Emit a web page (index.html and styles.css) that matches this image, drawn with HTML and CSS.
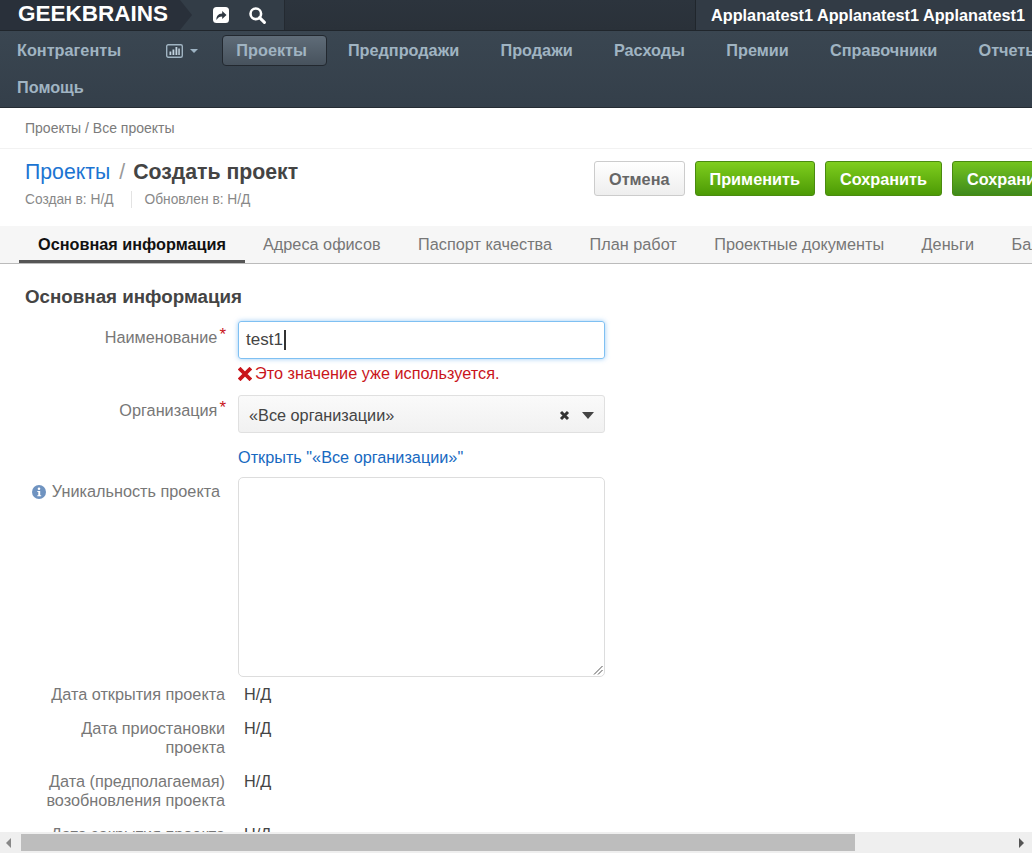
FILE: index.html
```html
<!DOCTYPE html>
<html lang="ru">
<head>
<meta charset="utf-8">
<title>Создать проект</title>
<link rel="stylesheet" href="styles.css">
</head>
<body>
<div class="viewport">
  <div class="page">
    <header class="topbar">
      <div class="brand">GEEKBRAINS</div>
      <div class="tools">
        <svg class="tool" width="18" height="18" viewBox="0 0 18 18"><rect x="1" y="1" width="16" height="16" rx="3.5" fill="#fff"/><path d="M4.500 14c-.4-3.600 1.600-6.300 5.700-6.500V5l4.300 4-4.300 4v-2.600c-2.600 0-4.300.9-5.700 3.600z" fill="#2f3842"/></svg>
        <svg class="tool" width="18" height="18" viewBox="0 0 18 18"><circle cx="7.800" cy="7.800" r="5.300" fill="none" stroke="#fff" stroke-width="2.600"/><path d="M11.600 11.600l4.800 4.800" stroke="#fff" stroke-width="3" stroke-linecap="round"/></svg>
      </div>
      <div class="topfill"></div>
      <div class="user">Applanatest1 Applanatest1 Applanatest1</div>
    </header>
    <nav class="nav">
      <a class="nav-item">Контрагенты</a>
      <a class="nav-item nav-chart">
        <svg width="17" height="14" viewBox="0 0 17 14"><rect x=".7" y=".7" width="15.600" height="12.600" rx="1.500" fill="none" stroke="#a0b4c2" stroke-width="1.400"/><path d="M3.500 7.500h1.800V11H3.500zM6.500 5.500h1.800V11H6.500zM9.500 3h1.800v8H9.500zM12.300 4.500h1.500V11h-1.500z" fill="#c2d3df"/></svg>
        <span class="caret"></span>
      </a>
      <a class="nav-item nav-active">Проекты</a>
      <a class="nav-item">Предпродажи</a>
      <a class="nav-item">Продажи</a>
      <a class="nav-item">Расходы</a>
      <a class="nav-item">Премии</a>
      <a class="nav-item">Справочники</a>
      <a class="nav-item">Отчеты</a>
      <a class="nav-item">Помощь</a>
    </nav>
    <div class="crumbs">Проекты / Все проекты</div>
    <section class="head">
      <div class="head-left">
        <h1 class="title"><a class="title-link">Проекты</a><span class="title-sep">/</span><b>Создать проект</b></h1>
        <div class="meta"><span class="meta-a">Создан в: Н/Д</span><span class="meta-b">Обновлен в: Н/Д</span></div>
      </div>
      <div class="actions">
        <button class="btn btn-plain">Отмена</button>
        <button class="btn btn-green">Применить</button>
        <button class="btn btn-green">Сохранить</button>
        <button class="btn btn-green btn-dark">Сохранить и закрыть</button>
      </div>
    </section>
    <div class="tabs">
      <a class="tab tab-active">Основная информация</a>
      <a class="tab">Адреса офисов</a>
      <a class="tab">Паспорт качества</a>
      <a class="tab">План работ</a>
      <a class="tab">Проектные документы</a>
      <a class="tab">Деньги</a>
      <a class="tab">Баланс</a>
    </div>
    <main class="form">
      <h2 class="section-title">Основная информация</h2>
      <div class="row">
        <label class="label">Наименование<i class="star">*</i></label>
        <div class="field">
          <div class="input">test1<span class="cursor"></span></div>
          <div class="error"><svg width="14" height="14" viewBox="0 0 14 14"><path d="M2.500 2.500l9 9M11.500 2.500l-9 9" stroke="#c9151b" stroke-width="3.800" stroke-linecap="square"/></svg>Это значение уже используется.</div>
        </div>
      </div>
      <div class="row row-org">
        <label class="label label-org">Организация<i class="star">*</i></label>
        <div class="field">
          <div class="select">
            <span class="select-text">«Все организации»</span>
            <svg width="11" height="11" viewBox="0 0 11 11"><path d="M2 2l7 7M9 2l-7 7" stroke="#333" stroke-width="3"/></svg>
            <span class="select-caret"></span>
          </div>
          <a class="open-link">Открыть "«Все организации»"</a>
        </div>
      </div>
      <div class="row row-uniq">
        <label class="label label-info"><svg width="14" height="14" viewBox="0 0 14 14"><circle cx="7" cy="7" r="7" fill="#6f93c0"/><circle cx="7" cy="3.700" r="1.300" fill="#fff"/><path d="M5.300 6h2.900v4.200h1v1.100H5.300v-1.100h1V7.100h-1z" fill="#fff"/></svg>Уникальность проекта</label>
        <div class="field">
          <div class="textarea">
            <svg class="grip" width="10" height="10" viewBox="0 0 10 10"><path d="M9.500 1L1 9.500M9.500 5L5 9.500" stroke="#555" stroke-width="1"/></svg>
          </div>
        </div>
      </div>
      <div class="drow"><div class="dlabel">Дата открытия проекта</div><div class="dval">Н/Д</div></div>
      <div class="drow"><div class="dlabel">Дата приостановки проекта</div><div class="dval">Н/Д</div></div>
      <div class="drow"><div class="dlabel">Дата (предполагаемая) возобновления проекта</div><div class="dval">Н/Д</div></div>
      <div class="drow"><div class="dlabel">Дата закрытия проекта</div><div class="dval">Н/Д</div></div>
    </main>
  </div>
</div>
<div class="scrollbar">
  <span class="arrow arrow-left"></span>
  <div class="track"><div class="thumb"></div></div>
  <span class="arrow arrow-right"></span>
</div>
</body>
</html>
```
FILE: styles.css
```css
* { box-sizing: border-box; }
html, body { margin: 0; height: 100%; overflow: hidden; }
body {
  display: flex;
  flex-direction: column;
  font-family: "Liberation Sans", Arial, sans-serif;
  font-size: 16.25px;
  color: #444;
  background: #fff;
}
.viewport { flex: 1; min-height: 0; overflow: hidden; }
.page { width: 1224px; }

/* top bar */
.topbar {
  display: flex;
  height: 31px;
  background: linear-gradient(#2c343d, #2a3139);
  border-bottom: 1px solid #20262c;
  color: #fff;
}
.brand {
  position: relative;
  z-index: 1;
  flex: none;
  width: 192px;
  padding-left: 18px;
  font-size: 22.5px;
  font-weight: bold;
  line-height: 28px;
  background: #29303a;
  clip-path: polygon(0 0, 180px 0, 192px 15px, 180px 30px, 0 30px);
}
.tools {
  display: flex;
  flex: none;
  gap: 18px;
  align-items: center;
  width: 105px;
  margin-left: -12px;
  padding: 0 0 0 32px;
  background: #333d47;
  border-right: 1px solid #242a31;
}
.tool { flex: none; }
.topfill { flex: none; width: 410px; }
.user {
  flex: none;
  width: 337px;
  padding-left: 15px;
  background: #323b45;
  border-left: 1px solid #20262c;
  font-size: 16.25px;
  font-weight: bold;
  line-height: 30px;
  white-space: nowrap;
}

/* nav */
.nav {
  display: flex;
  flex-wrap: wrap;
  align-content: flex-start;
  row-gap: 6px;
  height: 77px;
  padding: 4px 124px 0 17px;
  background: linear-gradient(#3a4651, #343f4a);
  border-bottom: 1px solid #252c33;
}
.nav-item {
  display: flex;
  align-items: center;
  height: 31px;
  margin-right: 41.3px;
  font-size: 16.25px;
  font-weight: bold;
  color: #a0b4c2;
  white-space: nowrap;
}
.nav-chart { gap: 7px; margin-right: 24px; margin-left: 4px; }
.caret { width: 0; height: 0; border: 4px solid transparent; border-top: 4px solid #9db3c3; border-bottom: 0; }
.nav-active {
  padding: 0 19px 0 13px;
  margin-right: 21px;
  background: linear-gradient(#5f6c78, #47525d);
  border: 1px solid #22282f;
  border-radius: 4px;
}

/* header section */
.crumbs {
  height: 41px;
  padding: 12px 0 0 25px;
  border-bottom: 1px solid #f2f2f2;
  font-size: 14px;
  color: #7b7b7b;
  line-height: 16px;
}
.head {
  display: flex;
  justify-content: space-between;
  height: 77px;
  padding-left: 25px;
}
.title { margin: 10px 0 0; font-size: 21.25px; font-weight: normal; line-height: 26px; }
.title-link { color: #1b74d2; }
.title-sep { margin: 0 8px 0 9px; color: #999; }
.title b { color: #444; }
.meta { display: flex; margin-top: 6px; font-size: 13.75px; line-height: 17px; color: #888; }
.meta-a { padding-right: 17px; border-right: 1px solid #e3e3e3; margin-right: 13px; }
.actions { display: flex; gap: 10px; padding-top: 12px; width: 630px; }
.btn {
  height: 35px;
  padding: 1px 14px 0;
  border-radius: 3px;
  font: bold 16.25px "Liberation Sans", Arial, sans-serif;
  white-space: nowrap;
}
.btn-plain { color: #666; background: linear-gradient(#fff, #eee); border: 1px solid #ccc; }
.btn-green { color: #fff; background: linear-gradient(#7fce1e, #4c9a05); border: 1px solid #4a8a10; }
.btn-dark { background: linear-gradient(#74c41e, #3f8a1c); }

/* tabs */
.tabs {
  display: flex;
  gap: 37.5px;
  height: 38px;
  padding-left: 19px;
  background: #f6f6f6;
  border-bottom: 1px solid #bbb;
  font-size: 16.25px;
  color: #777;
}
.tab { line-height: 37px; white-space: nowrap; }
.tab-active {
  height: 37px;
  padding: 0 18.5px 0 19px;
  margin-right: -19px;
  color: #111;
  font-weight: bold;
  border-bottom: 3px solid #555;
}

/* form */
.form { padding: 20px 0 0 25px; }
.section-title { margin: 0 0 11px; font-size: 18.75px; font-weight: bold; line-height: 26px; color: #444; }
.row { display: flex; }
.label { width: 213px; padding: 6px 12px 0 0; color: #777; font-size: 16.25px; text-align: right; white-space: nowrap; line-height: 20px; }
.label-org { padding-top: 5px; }
.star { color: #c9151b; font-style: normal; font-size: 17px; margin-left: 2px; vertical-align: 3px; line-height: 0; }
.field { width: 367px; }
.input {
  display: flex;
  align-items: center;
  height: 38px;
  padding-left: 7px;
  border-radius: 3px;
  border: 1px solid #7fc0f2;
  box-shadow: 0 0 5px rgba(90, 170, 240, .6);
  font-size: 17px;
}
.cursor { width: 2px; height: 20px; background: #333; margin-left: 1px; }
.error {
  display: flex;
  align-items: center;
  gap: 3px;
  height: 30px;
  padding-bottom: 1px;
  color: #c9151b;
  font-size: 16.25px;
}
.row-org { margin-top: 6px; }
.select {
  display: flex;
  align-items: center;
  height: 38px;
  padding: 2px 10px 0 10px;
  background: linear-gradient(#fafafa, #f1f1f1);
  border: 1px solid #e0e0e0;
  border-radius: 3px;
}
.select-text { flex: 1; }
.select-caret { margin-left: 12px; width: 0; height: 0; border: 6px solid transparent; border-top: 7px solid #444; border-bottom: 0; }
.open-link { display: block; margin-top: 15px; color: #1769c1; line-height: 18px; }
.row-uniq { margin-top: 11px; margin-bottom: 8px; }
.label-info { display: flex; justify-content: flex-end; align-items: flex-start; gap: 6px; padding: 4px 18px 0 0; }
.label-info svg { margin-top: 4px; }
.textarea {
  position: relative;
  height: 200px;
  border: 1px solid #ddd;
  border-radius: 5px;
}
.grip { position: absolute; right: 1px; bottom: 1px; }
.drow { display: flex; padding-bottom: 15px; line-height: 19px; }
.dlabel { width: 200px; text-align: right; color: #777; }
.dval { margin-left: 19px; }

/* scrollbar */
.scrollbar { display: flex; flex: none; height: 21px; background: #efefef; }
.arrow { display: flex; width: 21px; flex: none; position: relative; }
.arrow-left::after, .arrow-right::after { content: ""; position: absolute; top: 6px; width: 0; height: 0; border: 5px solid transparent; }
.arrow-left::after { left: 6px; border-right-color: #888; border-left: 0; }
.arrow-right::after { right: 8px; border-left-color: #555; border-right: 0; }
.track { flex: 1; padding: 2px 0; }
.thumb { width: 834px; height: 17px; background: #bdbdbd; }
```
